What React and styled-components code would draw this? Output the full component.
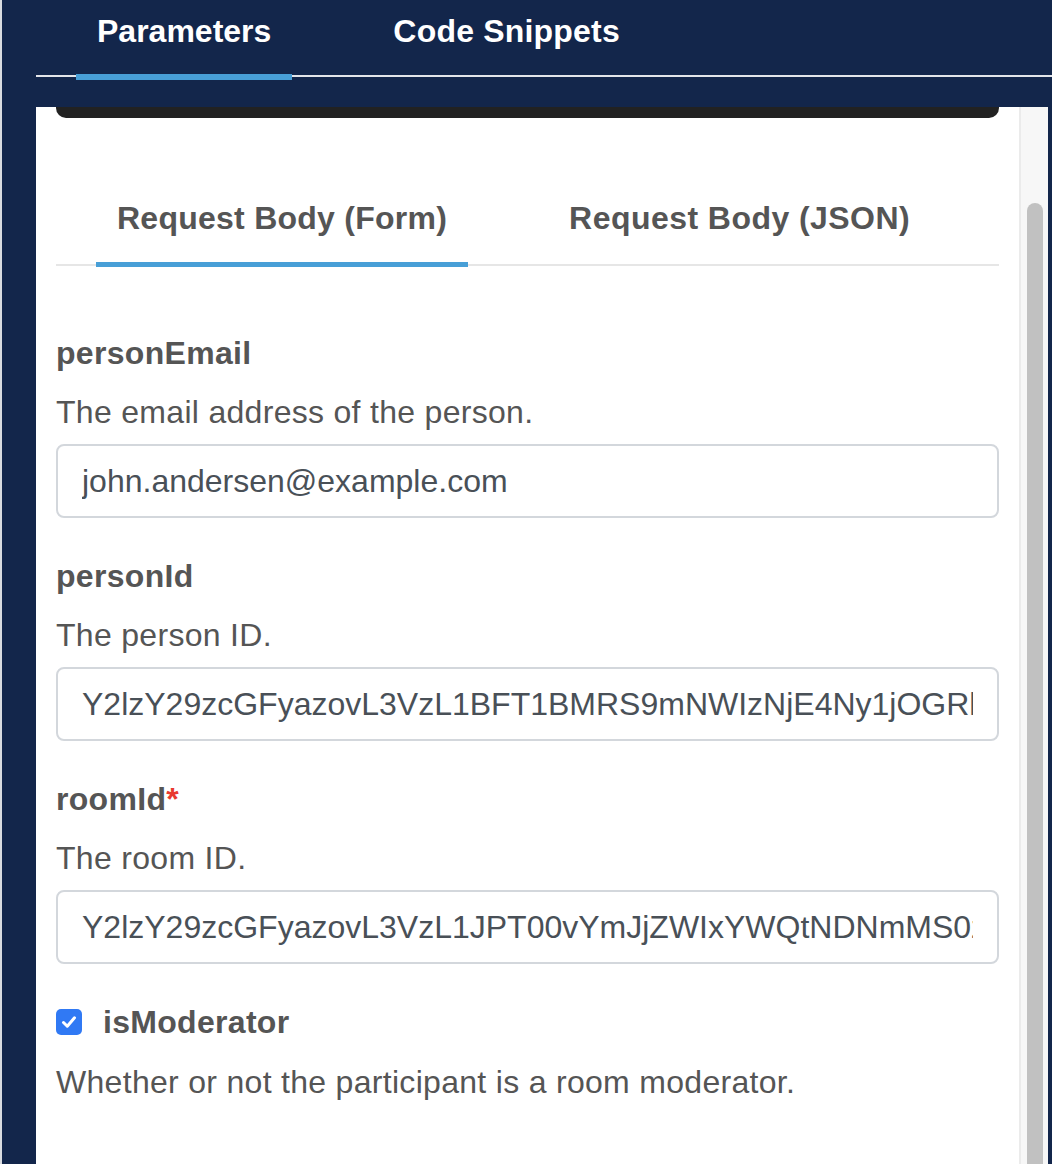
import React from "react";
import styled, { createGlobalStyle } from "styled-components";

const GlobalStyle = createGlobalStyle`
  html, body {
    margin: 0;
    padding: 0;
    background: #13264b;
  }
  body {
    font-family: "Liberation Sans", Arial, Helvetica, sans-serif;
  }
`;

const Frame = styled.div`
  display: flex;
  flex-direction: column;
  height: 1164px;
  overflow: hidden;
  box-sizing: border-box;
  border-left: 2px solid #d9dbe0;
  padding: 0 4px 0 34px;
  background: #13264b;
`;

const TabBar = styled.div`
  display: flex;
  gap: 80px;
  padding-left: ${(p) => p.$inset}px;
  border-bottom: 2px solid ${(p) => p.$line};
  margin: ${(p) => p.$margin};
`;

const Tab = styled.div`
  position: relative;
  padding: ${(p) => p.$pad};
  font-size: 32px;
  line-height: 34px;
  font-weight: 700;
  letter-spacing: ${(p) => p.$spacing || 0}px;
  color: ${(p) => p.$color};
  white-space: nowrap;

  &::after {
    content: "";
    display: ${(p) => (p.$active ? "block" : "none")};
    position: absolute;
    left: 0;
    right: 0;
    bottom: ${(p) => p.$barBottom}px;
    height: ${(p) => p.$barHeight}px;
    background: #489fd7;
  }
`;

const Body = styled.div`
  flex: 1;
  display: flex;
  background: #fff;
  min-height: 0;
`;

const Panel = styled.div`
  flex: 1;
  padding: 0 20px;
  min-width: 0;
`;

const CodeTail = styled.div`
  height: 11px;
  background: #222;
  border-radius: 0 0 10px 10px;
`;

const ScrollTrack = styled.div`
  width: 27px;
  background: #f7f7f7;
  border-left: 2px solid #ebebeb;
  display: flex;
  flex-direction: column;
`;

const Thumb = styled.div`
  flex: 1;
  margin: 96px 5px -20px 6px;
  border-radius: 8px;
  background: #c1c1c1;
`;

const Fields = styled.div`
  display: flex;
  flex-direction: column;
  gap: 41px;
  margin-top: 70px;
`;

const Field = styled.div`
  display: flex;
  flex-direction: column;
`;

const Label = styled.div`
  display: flex;
  align-items: center;
  font-size: 32px;
  line-height: 34px;
  font-weight: 700;
  letter-spacing: 0.3px;
  color: #555;
`;

const Required = styled.span`
  color: #e8392f;
`;

const Desc = styled.div`
  margin-top: ${(p) => p.$gap}px;
  font-size: 32px;
  line-height: 34px;
  letter-spacing: 0.3px;
  color: #555;
`;

const Input = styled.input`
  margin-top: 15px;
  box-sizing: border-box;
  width: 100%;
  height: 74px;
  padding: 0 24px;
  border: 2px solid #d3d7dc;
  border-radius: 8px;
  font-family: inherit;
  font-size: 32px;
  color: #495057;
  background: #fff;
  outline: none;
`;

const CheckBox = styled.span`
  display: inline-flex;
  align-items: center;
  justify-content: center;
  width: 26px;
  height: 26px;
  border-radius: 5px;
  background: #3079f4;
  margin-right: 21px;
`;

const fields = [
  {
    name: "personEmail",
    desc: "The email address of the person.",
    value: "john.andersen@example.com",
  },
  {
    name: "personId",
    desc: "The person ID.",
    value:
      "Y2lzY29zcGFyazovL3VzL1BFT1BMRS9mNWIzNjE4Ny1jOGRkLTQ3MjctOGIyZi1mOWM0NDdmMjkwNDY",
  },
  {
    name: "roomId",
    desc: "The room ID.",
    required: true,
    value:
      "Y2lzY29zcGFyazovL3VzL1JPT00vYmJjZWIxYWQtNDNmMS0zYjU4LTkxNDctZjE0YmIwYzRkMTU0",
  },
];

function Check() {
  return (
    <CheckBox>
      <svg width="18" height="18" viewBox="0 0 18 18" fill="none">
        <path
          d="M3.5 9.5 L7.3 13.2 L14.5 4.8"
          stroke="#fff"
          strokeWidth="3"
          strokeLinecap="round"
          strokeLinejoin="round"
        />
      </svg>
    </CheckBox>
  );
}

export default function App() {
  return (
    <>
      <GlobalStyle />
      <Frame>
        <TabBar $inset={40} $line="#e3e5ea" $margin="0 -4px 30px 0">
          <Tab $active $color="#fff" $pad="14px 21px 27px" $barBottom={-5} $barHeight={6}>
            Parameters
          </Tab>
          <Tab $color="#fff" $pad="14px 21px 27px" $spacing={0.2}>
            Code Snippets
          </Tab>
        </TabBar>

        <Body>
          <Panel>
            <CodeTail />
            <TabBar $inset={40} $line="#e6e6e6" $margin="63px 0 0">
              <Tab
                $active
                $color="#555"
                $pad="20px 21px 29px"
                $barBottom={-3}
                $barHeight={5}
                $spacing={0.25}
              >
                Request Body (Form)
              </Tab>
              <Tab $color="#555" $pad="20px 21px 29px" $spacing={0.45}>
                Request Body (JSON)
              </Tab>
            </TabBar>

            <Fields>
              {fields.map((f) => (
                <Field key={f.name}>
                  <Label>
                    {f.name}
                    {f.required && <Required>*</Required>}
                  </Label>
                  <Desc $gap={25}>{f.desc}</Desc>
                  <Input type="text" defaultValue={f.value} />
                </Field>
              ))}
              <Field>
                <Label>
                  <Check />
                  isModerator
                </Label>
                <Desc $gap={26}>Whether or not the participant is a room moderator.</Desc>
              </Field>
            </Fields>
          </Panel>
          <ScrollTrack>
            <Thumb />
          </ScrollTrack>
        </Body>
      </Frame>
    </>
  );
}
